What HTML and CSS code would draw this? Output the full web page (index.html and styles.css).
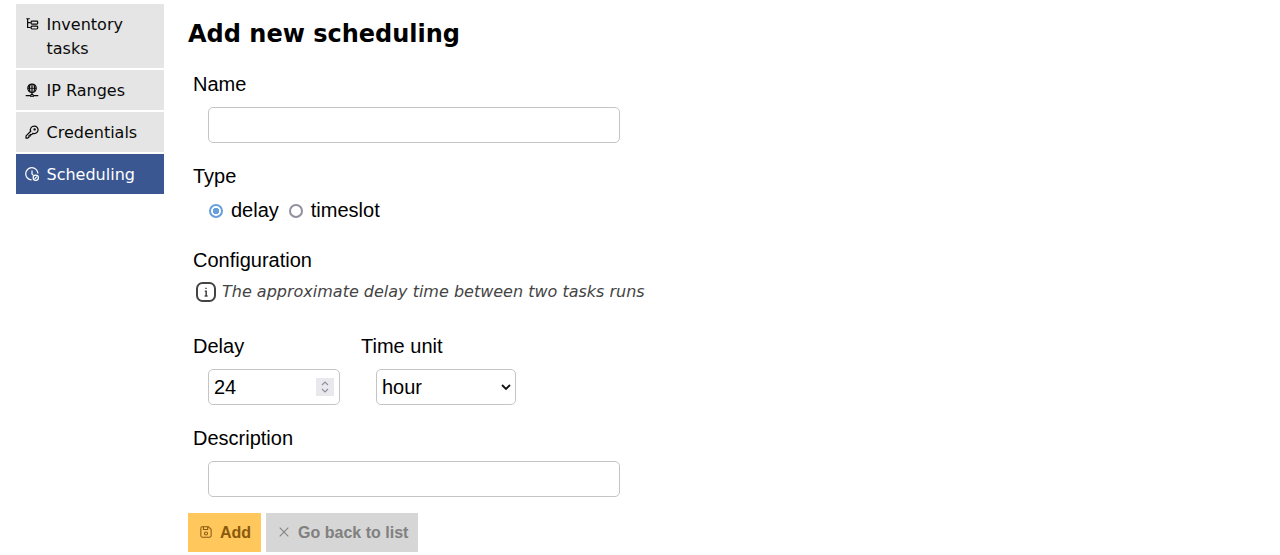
FILE: index.html
```html
<!DOCTYPE html>
<html lang="en">
<head>
<meta charset="utf-8">
<title>Add new scheduling</title>
<link rel="stylesheet" href="styles.css">
</head>
<body>
<div class="layout">
  <nav class="side">
    <a class="item"><svg class="ico" viewBox="0 0 16 16"><path d="M3 2v10h3.500M3 6.500h3.500M1.500 2h4"/><rect x="7" y="4.800" width="7.500" height="3.400" rx="1"/><rect x="7" y="10.300" width="7.500" height="3.400" rx="1"/></svg><span>Inventory tasks</span></a>
    <a class="item"><svg class="ico" viewBox="0 0 16 16"><circle cx="8" cy="6" r="4.800"/><path d="M3.200 6h9.600M8 1.200v9.600M5.800 1.800c-1.200 2.600-1.200 5.800 0 8.400M10.200 1.800c1.200 2.600 1.200 5.800 0 8.400M8 10.800v2M.8 14.500h5.400M9.800 14.500h5.400"/><circle cx="8" cy="14.500" r="1.500"/></svg><span>IP Ranges</span></a>
    <a class="item"><svg class="ico" viewBox="0 0 16 16"><path d="M10.500 1.200a4.300 4.300 0 1 1-1.400 8.300L7.500 11H6v1.500H4.500V14L3 15H1.200v-2.500l5.300-5.300a4.300 4.300 0 0 1 4-6z"/><circle cx="11" cy="5" r=".7"/></svg><span>Credentials</span></a>
    <a class="item active"><svg class="ico" viewBox="0 0 16 16"><path d="M14.800 7.500a7 7 0 1 0-7.300 7.300"/><path d="M8 4v4l1.500 1.500"/><circle cx="12.300" cy="12.300" r="3"/><path d="M11 13.600l2.600-2.600"/></svg><span>Scheduling</span></a>
  </nav>
  <main class="main">
    <h1 class="title">Add new scheduling</h1>
    <form class="form">
      <div class="field">
        <label class="label">Name</label>
        <input class="text-input" type="text">
      </div>
      <div class="field field-type">
        <label class="label">Type</label>
        <div class="radios">
          <label class="radio"><span class="dot on"></span>delay</label>
          <label class="radio"><span class="dot"></span>timeslot</label>
        </div>
      </div>
      <div class="config">
        <div class="label">Configuration</div>
        <div class="hint">
          <svg class="info" viewBox="0 0 20 20"><rect x="1" y="1" width="18" height="18" rx="5.500"/><path class="i-line" d="M8.800 9.200h1.400v4.600M8.600 14h3M10 5.800v1.200"/></svg>
          <em>The approximate delay time between two tasks runs</em>
        </div>
      </div>
      <div class="row">
        <div class="field">
          <label class="label">Delay</label>
          <div class="num-wrap">
            <input class="num-input" type="number" value="24">
            <span class="spin"><svg viewBox="0 0 18 18"><path d="M6 7l3-3 3 3M6 11l3 3 3-3"/></svg></span>
          </div>
        </div>
        <div class="field">
          <label class="label">Time unit</label>
          <select class="select"><option>hour</option><option>day</option></select>
        </div>
      </div>
      <div class="field">
        <label class="label">Description</label>
        <input class="text-input" type="text">
      </div>
      <div class="actions">
        <button class="btn add" type="button"><svg class="btn-ico" viewBox="0 0 14 14"><path d="M1 2.500a1.500 1.500 0 0 1 1.500-1.500h7.500l3 3v7.500a1.500 1.500 0 0 1-1.500 1.500h-9a1.500 1.500 0 0 1-1.500-1.500z"/><path d="M4 1v3h5V1"/><circle cx="7" cy="8.800" r="1.800"/></svg>Add</button>
        <button class="btn back" type="button"><svg class="btn-ico" viewBox="0 0 14 14"><path d="M2 2l10 10M12 2L2 12"/></svg>Go back to list</button>
      </div>
    </form>
  </main>
</div>
</body>
</html>
```
FILE: styles.css
```css
html, body { margin: 0; padding: 0; background: #fff; }
body { font-family: "Liberation Sans", Arial, sans-serif; color: #000; height: 555px; overflow: hidden; }
.layout { display: flex; align-items: flex-start; padding: 4px 0 0 16px; }
.side { width: 148px; display: flex; flex-direction: column; gap: 2px; flex: none; font-family: "DejaVu Sans", sans-serif; font-size: 16px; line-height: 24px; }
.item { display: flex; align-items: flex-start; background: #e5e5e5; color: #0a0a0a; padding: 9px 8px 7px 9px; }
.item.active { background: #3b5792; color: #fff; }
.ico { width: 14px; height: 14px; margin: 4px 7.500px 0 0; flex: none; fill: none; stroke: currentColor; stroke-width: 1.400; }
.main { margin-left: 24px; flex: 1; }
.title { margin: 0; font: bold 24px/32px "DejaVu Sans", sans-serif; padding-top: 14px; height: 32px; }
.form { display: flex; flex-direction: column; }
.field { display: flex; flex-direction: column; align-items: flex-start; padding: 0 5px; }
.label { display: block; font-size: 20px; line-height: 24px; margin-bottom: 11px; }
.form > .field:first-child { margin-top: 22px; }
.text-input, .num-input, .select { box-sizing: border-box; height: 36px; border: 1px solid #c4c4c4; border-radius: 5px; background: #fff; font: 20px "Liberation Sans", sans-serif; color: #000; margin: 0 0 0 15px; outline: none; }
.text-input { width: 412px; padding: 0 5px; }
.num-wrap { position: relative; display: flex; }
.num-input { width: 132px; padding: 0 5px; appearance: textfield; }
.num-input::-webkit-inner-spin-button { display: none; }
.spin { position: absolute; left: 123px; top: 9px; width: 18px; height: 18px; background: #e9e9ed; }
.spin svg { display: block; width: 18px; height: 18px; fill: none; stroke: #8f8f9d; stroke-width: 1.200; }
.select { width: 140px; padding: 0 0 0 5px; appearance: none; background: #fff url("data:image/svg+xml,%3Csvg xmlns='http://www.w3.org/2000/svg' width='10' height='6'%3E%3Cpath d='M1 1l4 4 4-4' fill='none' stroke='%23111' stroke-width='1.800'/%3E%3C/svg%3E") no-repeat right 4px center; }
.field-type { margin-top: 21px; }
.field-type .label { margin-bottom: 0; }
.radios { display: flex; gap: 10px; margin: 10px 0 0 16px; height: 24px; align-items: center; }
.radio { display: flex; align-items: center; font-size: 20px; line-height: 24px; gap: 8px; }
.dot { box-sizing: border-box; width: 14px; height: 14px; border-radius: 50%; border: 2px solid #8f8f9d; background: #fff; margin-top: 2px; }
.dot.on { border-color: #669fdc; background: radial-gradient(circle, #669fdc 0 3px, #fff 3.500px); }
.config { padding: 0 5px; margin-top: 26px; }
.config .label { margin-bottom: 10px; }
.hint { display: flex; align-items: center; height: 20px; gap: 6px; margin-left: 2.500px; font: 16px/20px "DejaVu Sans", sans-serif; color: #444; white-space: nowrap; }
.hint em { margin-left: .5px; }
.info { width: 20px; height: 20px; fill: none; stroke: #444; stroke-width: 2; flex: none; }
.i-line { stroke-width: 1.500; }
.row { display: flex; margin-top: 32px; }
.row .field { width: 158px; }
.row .field + .field { width: auto; padding-left: 5px; }
.row + .field { margin-top: 21px; }
.actions { display: flex; gap: 5px; margin-top: 16px; }
.btn { display: flex; align-items: center; height: 39px; border: 0; margin: 0; font: bold 16px "Liberation Sans", sans-serif; padding: 0 10px 0 12px; }
.btn-ico { width: 12px; height: 12px; fill: none; stroke: currentColor; stroke-width: 1.200; margin: -2px 8px 0 0; }
.add { background: #ffc75c; color: #8a5a0c; }
.back { background: #d6d6d6; color: #808080; }
```
